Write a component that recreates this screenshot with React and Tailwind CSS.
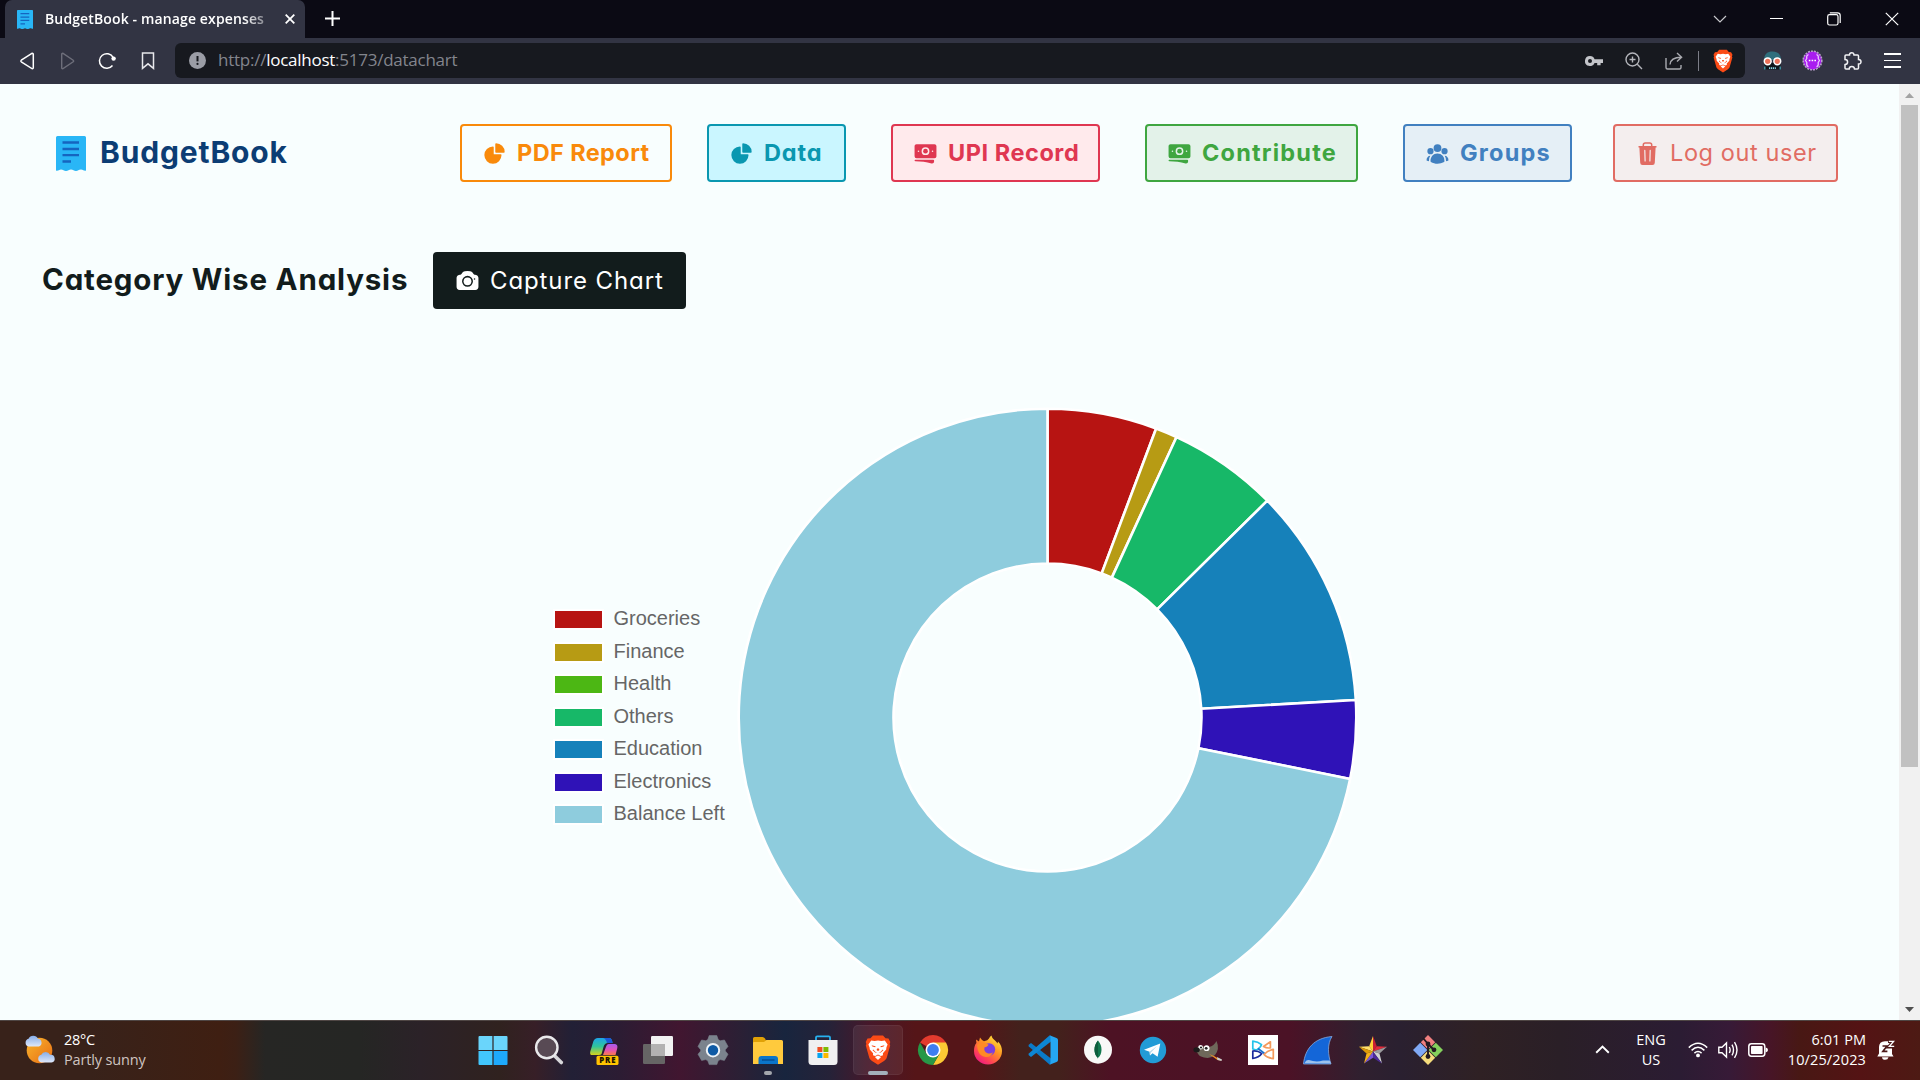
import React from "react";
import {
  HiChartPie,
  HiBanknotes,
  HiUserGroup,
  HiCamera,
} from "react-icons/hi2";

const UI = "font-['Open_Sans','Noto_Sans',sans-serif]";

/* ---------- shared drawings ---------- */

function Receipt({ className }) {
  return (
    <svg className={className} viewBox="0 0 30 35" preserveAspectRatio="none">
      <path
        d="M0 1.5Q0 0 1.5 0H28.5Q30 0 30 1.5V34.5C28 35.4 27.5 33.4 25 33.4S22 35 20 35S17 33.4 15 33.4S12 35 10 35S7 33.4 5 33.4S2 35.4 0 34.5Z"
        fill="#29b6f6"
      />
      <path d="M6.5 6.5H23M6.5 13H23M6.5 19.2H23M6.5 25.5H15" stroke="#1565c0" strokeWidth="2.3" />
    </svg>
  );
}

function Trash({ className }) {
  return (
    <svg className={className} viewBox="0 0 25 25">
      <path d="M8.3 5V4Q8.3 2 10.3 2H14.7Q16.7 2 16.7 4V5" fill="none" stroke="currentColor" strokeWidth="1.5" />
      <path d="M3.5 5H21.5V6.6H20.6L19.8 21.8Q19.7 24 17.5 24H7.5Q5.3 24 5.2 21.8L4.4 6.6H3.5Z" fill="currentColor" />
      <path d="M9.8 9.4L10.1 20M15.2 9.4L14.9 20" stroke="#f4eeee" strokeWidth="1.2" strokeLinecap="round" />
    </svg>
  );
}

function BraveLogo({ className }) {
  return (
    <svg className={className} viewBox="0 0 26 30">
      <path
        d="M8 0.5H18L20.5 3.2L23.5 3.5L25.3 7L24.6 9L25.2 10.5L21.8 22.5C21.2 24.2 20.2 25.2 19 26L13 29.8L7 26C5.8 25.2 4.8 24.2 4.2 22.5L0.8 10.5L1.4 9L0.7 7L2.5 3.5L5.5 3.2Z"
        fill="#fb4b16"
      />
      <path
        d="M6.2 5.6L9.6 6.1L13 5.5L16.4 6.1L19.8 5.6L22.6 9.6L21.4 12.4L21.2 14.6L17.9 18.2L18 20.2L15.8 20.9L13 19.4L10.2 20.9L8 20.2L8.1 18.2L4.8 14.6L4.6 12.4L3.4 9.6Z"
        fill="#fff"
      />
      <path d="M9.9 21.9L13 20.4L16.1 21.9L13 24.9Z" fill="#fff" />
      <path
        d="M6.5 10.2L10.6 11.2L10.2 12.2L7.4 11.5ZM19.5 10.2L15.4 11.2L15.8 12.2L18.6 11.5ZM11.6 15L13 15.9L14.4 15L13.9 13.6H12.1ZM8.2 14.4L10.3 16.8L12.2 17.8L10.2 17.6L7.6 15.2ZM17.8 14.4L15.7 16.8L13.8 17.8L15.8 17.6L18.4 15.2Z"
        fill="#fb4b16"
      />
    </svg>
  );
}

/* ---------- browser chrome ---------- */

function TabStrip() {
  return (
    <div className="flex h-[38px] items-stretch bg-[#0b0a14] text-white">
      <div className="ml-[5px] flex w-[300px] items-center rounded-t-[7px] bg-[#323443] pl-3">
        <Receipt className="h-[19px] w-4" />
        <div
          className={`ml-3 w-[223px] whitespace-nowrap pb-px text-[14px] font-semibold tracking-[0.13px] ${UI} [mask-image:linear-gradient(to_right,black_89%,rgba(0,0,0,0.45)_98%)]`}
        >
          BudgetBook - manage expenses
        </div>
        <svg className="ml-[17px] h-[10px] w-[10px]" viewBox="0 0 10 10">
          <path d="M0.7 0.7L9.3 9.3M9.3 0.7L0.7 9.3" stroke="#fff" strokeWidth="1.8" />
        </svg>
      </div>
      <svg className="ml-5 mt-[11px] h-[15px] w-[15px]" viewBox="0 0 15 15">
        <path d="M7.5 0V15M0 7.5H15" stroke="#fff" strokeWidth="2" />
      </svg>
      <div className="ml-auto mr-[21px] flex items-center pb-px">
        <svg className="h-[8px] w-[14px]" viewBox="0 0 14 8">
          <path d="M1 1L7 7L13 1" fill="none" stroke="#c8c8cc" strokeWidth="1.2" />
        </svg>
        <div className="ml-[43px] h-px w-[13px] bg-white" />
        <svg className="ml-[44px] h-[14px] w-[14px]" viewBox="0 0 14 14" fill="none" stroke="#fff" strokeWidth="1.2">
          <rect x="0.7" y="2.7" width="10.3" height="10.3" rx="1.8" />
          <path d="M2.8 0.9H10.5Q13.2 0.9 13.2 3.6V11" />
        </svg>
        <svg className="ml-[44px] h-[14px] w-[14px]" viewBox="0 0 14 14">
          <path d="M0.8 0.8L13.2 13.2M13.2 0.8L0.8 13.2" stroke="#fff" strokeWidth="1.2" />
        </svg>
      </div>
    </div>
  );
}

function AddressBar() {
  return (
    <div className="flex h-[46px] items-center bg-[#323443] pb-px">
      <svg className="ml-5 h-[18px] w-[15px]" viewBox="0 0 15 18" fill="none" stroke="#fff" strokeWidth="1.5">
        <path d="M12.3 1.2L1.3 8.2Q0.4 9 1.3 9.8L12.3 16.8Q13.3 16.8 13.3 15.8V2.2Q13.3 1.2 12.3 1.2Z" />
      </svg>
      <svg className="ml-[25px] h-[18px] w-[15px]" viewBox="0 0 15 18" fill="none" stroke="#6d6e7a" strokeWidth="1.4">
        <path d="M2.7 1.2L13.2 8.2Q14.1 9 13.2 9.8L2.7 16.8Q1.7 16.8 1.7 15.8V2.2Q1.7 1.2 2.7 1.2Z" />
      </svg>
      <svg className="ml-[23px] h-[18px] w-[19px]" viewBox="0 0 19 18" fill="none" stroke="#fff" strokeWidth="1.5">
        <path d="M14.5 13.5A7.3 7.3 0 1 1 15 5.2" />
        <circle cx="15.6" cy="6.6" r="2.2" fill="#fff" stroke="none" />
      </svg>
      <svg className="ml-[24px] h-[18px] w-[14px]" viewBox="0 0 14 18" fill="none" stroke="#e8e8ec" strokeWidth="1.5">
        <path d="M1.5 1H12.5V16.3L7 11.8L1.5 16.3Z" />
      </svg>
      <div className="ml-[20px] flex h-[35px] w-[1570px] items-center rounded-[6px] bg-[#17191f]">
        <svg className="ml-[14px] h-[17px] w-[17px]" viewBox="0 0 17 17">
          <circle cx="8.5" cy="8.5" r="8.5" fill="#9b9da6" />
          <path d="M8.5 4V9.4" stroke="#17191f" strokeWidth="2" />
          <circle cx="8.5" cy="11.9" r="1.1" fill="#17191f" />
        </svg>
        <div className={`ml-3 whitespace-nowrap pb-px text-[17px] font-normal tracking-[-0.25px] text-[#83858d] ${UI}`}>
          http://<span className="text-white">localhost</span>:5173/datachart
        </div>
        <div className="ml-auto mr-3 flex items-center">
          <svg className="h-[10px] w-[18px]" viewBox="0 0 18 10">
            <path
              fillRule="evenodd"
              d="M5 0A5 5 0 1 0 9.6 6.9H12.2V9.2H15.6V6.9H18V3.2H9.6A5 5 0 0 0 5 0ZM5 3A2 2 0 1 1 5 7A2 2 0 1 1 5 3Z"
              fill="#c4c5ca"
            />
          </svg>
          <svg className="ml-[22px] h-[18px] w-[18px]" viewBox="0 0 18 18" fill="none" stroke="#b4b5bb" strokeWidth="1.4">
            <circle cx="7.5" cy="7.5" r="6.5" />
            <path d="M12.3 12.3L17 17M4.5 7.5H10.5M7.5 4.5V10.5" />
          </svg>
          <svg className="ml-[22px] h-[18px] w-[18px]" viewBox="0 0 18 18" fill="none" stroke="#a9aab0" strokeWidth="1.4">
            <path d="M1 6V15.5Q1 17 2.5 17H14.5Q16 17 16 15.5V13M5 12.5Q5.5 5.5 16.3 5.3M12 1L16.6 5.3L12 9.6" />
          </svg>
          <div className="ml-[15px] h-[20px] w-px bg-[#7c7e88]" />
          <BraveLogo className="ml-[14px] h-[24px] w-[20px]" />
        </div>
      </div>
      <svg className="ml-[18px] h-[19px] w-[19px]" viewBox="0 0 19 19">
        <path d="M1 9C1 3 4.5 0.5 9.5 0.5S18 3 18 9Z" fill="#2f6f7d" />
        <path d="M1.5 12H17.5V18.5H1.5Z" fill="#10151b" />
        <path d="M1 15.5H2.5V18.5H1ZM16.5 15.5H18V18.5H16.5Z" fill="#3d91a0" />
        <circle cx="4.7" cy="10.3" r="3.4" fill="#ec7159" stroke="#fff" strokeWidth="1.5" />
        <circle cx="14.3" cy="10.3" r="3.4" fill="#ec7159" stroke="#fff" strokeWidth="1.5" />
        <path d="M6 17.2H13" stroke="#8cd5e3" strokeWidth="1.8" strokeDasharray="1.2 0.7" />
      </svg>
      <svg className="ml-[20px] h-[21px] w-[21px]" viewBox="0 0 21 21" fill="none">
        <circle cx="10.5" cy="10.5" r="9.3" fill="#a91cf0" stroke="#b9a0cc" strokeWidth="1.6" strokeDasharray="2 1" />
        <path
          d="M6.5 4.5Q4 5.5 4.8 8.5L3.5 10.5L4.8 12.5Q4.2 16 6.5 16.8M14.5 4.5Q17 5.5 16.2 8.5L17.5 10.5L16.2 12.5Q16.8 16 14.5 16.8"
          stroke="#ecc8ff"
          strokeWidth="1.2"
        />
        <path d="M6.8 10.5H14.5" stroke="#fff" strokeWidth="1.6" strokeDasharray="1.6 1.2" />
      </svg>
      <svg className="ml-[21px] h-[18px] w-[18px]" viewBox="0 0 18 18" fill="none" stroke="#f1f1f4" strokeWidth="1.5">
        <path d="M1 4Q1 3 2 3H5.5Q5.5 0.8 7.7 0.8T10 3H13.5Q14.5 3 14.5 4V7.5Q17 7.5 17 9.8T14.5 12V16Q14.5 17 13.5 17H10.5Q10.3 14.6 7.8 14.6T5.2 17H2Q1 17 1 16V12.6Q3.6 12.4 3.6 10T1 7.6Z" />
      </svg>
      <div className="ml-[22px] flex w-[17px] flex-col gap-[5px]">
        <div className="h-[1.5px] bg-white" />
        <div className="h-[1.5px] bg-white" />
        <div className="h-[1.5px] bg-white" />
      </div>
    </div>
  );
}

/* ---------- application page ---------- */

const navItems = [
  { label: "PDF Report", Icon: HiChartPie, cls: "w-[212px] border-[#f98a0b] text-[#f98a0b]", text: "font-bold tracking-[0.4px]" },
  { label: "Data", Icon: HiChartPie, cls: "ml-[35px] w-[139px] border-[#0a97b0] bg-[#caf6ff] text-[#0a97b0]", text: "font-bold tracking-[0.9px]" },
  { label: "UPI Record", Icon: HiBanknotes, cls: "ml-[45px] w-[209px] border-[#df3751] bg-[#ffeaec] text-[#df3751]", text: "font-bold tracking-[0.55px]" },
  { label: "Contribute", Icon: HiBanknotes, cls: "ml-[45px] w-[213px] border-[#3fa640] bg-[#e3f2e9] text-[#3fa640]", text: "font-bold tracking-[1.2px]" },
  { label: "Groups", Icon: HiUserGroup, cls: "ml-[45px] w-[169px] border-[#4180c0] bg-[#e5eff6] text-[#4180c0]", text: "font-bold tracking-[1.2px]" },
  { label: "Log out user", Icon: Trash, cls: "ml-[41px] w-[225px] border-[#e16c63] bg-[#f4eeee] text-[#e16c63]", text: "font-normal tracking-[0.6px]" },
];

function Navbar() {
  return (
    <header className="flex h-[138px] items-center">
      <Receipt className="ml-[56px] h-[35px] w-[30px]" />
      <div className="ml-[14px] w-[360px] whitespace-nowrap pb-[2px] text-[30px] font-bold tracking-[0.85px] text-[#0c3d74]">
        BudgetBook
      </div>
      {navItems.map(({ label, Icon, cls, text }) => (
        <button
          key={label}
          className={`flex h-[58px] shrink-0 items-center whitespace-nowrap rounded-[4px] border-2 pl-[20px] text-[23.5px] ${cls}`}
        >
          <Icon className="h-[25px] w-[25px] shrink-0" />
          <span className={`ml-[10px] ${text}`}>{label}</span>
        </button>
      ))}
    </header>
  );
}

const slices = [
  { label: "Groceries", color: "#b71412", from: 0, to: 20.6, swatch: "bg-[#b71412]" },
  { label: "Finance", color: "#b79b14", from: 20.6, to: 24.7, swatch: "bg-[#b79b14]" },
  { label: "Health", color: "#4cb714", from: 24.7, to: 24.7, swatch: "bg-[#4cb714]" },
  { label: "Others", color: "#17b868", from: 24.7, to: 45.4, swatch: "bg-[#17b868]" },
  { label: "Education", color: "#1681ba", from: 45.4, to: 86.75, swatch: "bg-[#1681ba]" },
  { label: "Electronics", color: "#2f12b7", from: 86.75, to: 101.5, swatch: "bg-[#2f12b7]" },
  { label: "Balance Left", color: "#8eccdd", from: 101.5, to: 360, swatch: "bg-[#8eccdd]" },
];

const CX = 310.5;
const CY = 310.5;
const R_OUT = 308.8;
const R_IN = 154;

function point(r, deg) {
  const a = (deg * Math.PI) / 180;
  return `${CX + r * Math.sin(a)} ${CY - r * Math.cos(a)}`;
}

function ring(from, to) {
  const large = to - from > 180 ? 1 : 0;
  return `M${point(R_OUT, from)}A${R_OUT} ${R_OUT} 0 ${large} 1 ${point(R_OUT, to)}L${point(R_IN, to)}A${R_IN} ${R_IN} 0 ${large} 0 ${point(R_IN, from)}Z`;
}

function DoughnutChart() {
  return (
    <div className="mt-[98px] flex items-center pl-[553px]">
      <ul className="w-[184px] pb-[2px] font-['Liberation_Sans',Arial,sans-serif] text-[20px] text-[#666]">
        {slices.map((s) => (
          <li key={s.label} className="flex h-[32.5px] items-center whitespace-nowrap leading-none">
            <span className={`mt-[2px] h-[21px] w-[51px] border-2 border-white ${s.swatch}`} />
            <span className="mb-px ml-[9.5px]">{s.label}</span>
          </li>
        ))}
      </ul>
      <svg className="h-[620px] w-[620px] shrink-0" viewBox="0 0 620 620">
        {slices
          .filter((s) => s.to > s.from)
          .map((s) => (
            <path key={s.label} d={ring(s.from, s.to)} fill={s.color} stroke="#fff" strokeWidth="2.6" strokeLinejoin="bevel" />
          ))}
      </svg>
    </div>
  );
}

function Page() {
  return (
    <div className="h-[936px] min-w-0 flex-1 overflow-hidden bg-[#f8fefe] font-['Inter',sans-serif] [font-feature-settings:'cv11']">
      <Navbar />
      <div className="mt-[30px] flex h-[57px] items-center">
        <h1 className="ml-[42px] w-[391px] whitespace-nowrap pb-[2px] text-[29.5px] font-bold tracking-[0.82px] text-[#121c1c]">
          Category Wise Analysis
        </h1>
        <button className="flex h-[57px] w-[253px] items-center whitespace-nowrap rounded-[4px] bg-[#121c1c] pl-[22px] text-[24px] tracking-[0.9px] text-white">
          <HiCamera className="h-[25px] w-[25px]" />
          <span className="ml-[10px]">Capture Chart</span>
        </button>
      </div>
      <DoughnutChart />
    </div>
  );
}

function Scrollbar() {
  return (
    <div className="flex h-[936px] w-[21px] flex-col items-center bg-[#f1f1f1]">
      <svg className="mt-[9px] h-[5px] w-[9px]" viewBox="0 0 9 5">
        <path d="M0 5L4.5 0L9 5Z" fill="#a3a3a3" />
      </svg>
      <div className="mt-[7px] h-[662px] w-[17px] bg-[#c1c1c1]" />
      <svg className="mb-[8px] mt-auto h-[5px] w-[9px]" viewBox="0 0 9 5">
        <path d="M0 0L4.5 5L9 0Z" fill="#505050" />
      </svg>
    </div>
  );
}

/* ---------- taskbar icons, each on a 30 x 30 grid ---------- */

const G = ({ children }) => (
  <svg className="h-[30px] w-[30px] overflow-visible" viewBox="0 0 30 30">
    {children}
  </svg>
);

const WindowsIcon = () => (
  <G>
    <path d="M0.5 2Q0.5 1 1.5 1H14.4V14.9H0.5ZM15.6 1H28.5Q29.5 1 29.5 2V14.9H15.6Z" fill="#6ad5fb" />
    <path d="M0.5 16.1H14.4V30H1.5Q0.5 30 0.5 29Z" fill="#42c6fc" />
    <path d="M15.6 16.1H29.5V29Q29.5 30 28.5 30H15.6Z" fill="#1ea9fb" />
  </G>
);

const SearchIcon = () => (
  <G>
    <path d="M21.3 20.5L28.3 27.5" stroke="#d7d7da" strokeWidth="3.6" strokeLinecap="round" />
    <circle cx="13.8" cy="12.5" r="10.7" fill="#584a54" stroke="#e9e9eb" strokeWidth="2.4" />
  </G>
);

const CopilotIcon = () => (
  <G>
    <defs>
      <linearGradient id="cpA" x1="0" y1="0" x2="0" y2="1">
        <stop offset="0" stopColor="#1da4e8" />
        <stop offset="0.5" stopColor="#31c59a" />
        <stop offset="1" stopColor="#d6d31c" />
      </linearGradient>
      <linearGradient id="cpB" x1="0" y1="0" x2="0" y2="1">
        <stop offset="0" stopColor="#a45bef" />
        <stop offset="0.55" stopColor="#e452b4" />
        <stop offset="1" stopColor="#fb7a4b" />
      </linearGradient>
    </defs>
    <g transform="translate(2 0)">
      <path d="M8 3H19Q22 3 22.5 8H18Q14.5 8 13.5 12L11.5 19Q11 20 8.5 20H2Q-0.5 20 0.3 16.4L3.3 6.5Q4.5 3 8 3Z" fill="url(#cpA)" />
      <path d="M13 3H19Q22 3 22.5 8H17Q16 3.8 13 3Z" fill="#1a59d8" />
      <path d="M18.5 9H25Q28 9.5 27.3 13L25.5 20H13L16 11.8Q16.8 9.2 18.5 9Z" fill="url(#cpB)" />
      <rect x="6.5" y="20.8" width="22" height="9.2" rx="1.6" fill="#ffc400" />
      <text x="17.8" y="28.3" textAnchor="middle" fontSize="7.8" fontWeight="800" letterSpacing="0.9" fontFamily="Open Sans, sans-serif" fill="#1c1400">
        PRE
      </text>
    </g>
  </G>
);

const TaskViewIcon = () => (
  <G>
    <rect x="0" y="9" width="22" height="20" rx="1.2" fill="#666565" />
    <rect x="8" y="1" width="22" height="20" rx="1.2" fill="#f2f2f2" />
    <path d="M8 9H22V21H9Q8 21 8 20Z" fill="#b3b2b2" />
  </G>
);

const SettingsIcon = () => (
  <G>
    <path
      d="M11.2 0.6H18.8L20.2 4.6L22.2 5.8L26.4 5L30 11.4L27.3 14.8V16L30 19.2L26.4 25.4L22.2 24.6L20.2 25.8L18.8 29.6H11.2L9.8 25.8L7.8 24.6L3.6 25.4L0 19.2L2.7 16V14.8L0 11.4L3.6 5L7.8 5.8L9.8 4.6Z"
      fill="#7b838d"
      stroke="#7b838d"
      strokeLinejoin="round"
      strokeWidth="0.6"
    />
    <circle cx="15" cy="15.2" r="6.2" fill="#0e5aa5" stroke="#eef3f8" strokeWidth="2" />
  </G>
);

const FolderIcon = () => (
  <G>
    <path d="M0 3.5Q0 2 1.5 2H9.5Q11 2 12 3.5L13 5.5H28V12H0Z" fill="#e0a106" />
    <path d="M0 8Q0 7 1 7H11L13.5 5H28.5Q30 5 30 6.5V29H0Z" fill="#ffca3d" />
    <path d="M5.5 29V24Q5.5 21 8.5 21H22Q25 21 25 24V29Z" fill="#0b75c9" />
    <path d="M9 25H21.5" stroke="#064a8c" strokeWidth="1.3" />
  </G>
);

const StoreIcon = () => (
  <G>
    <path d="M8 7V2.6Q8 1.4 9.2 1.4H20.8Q22 1.4 22 2.6V7" fill="none" stroke="#27b1ef" strokeWidth="1.8" />
    <path d="M0.5 5H29.5V26.5Q29.5 30 26 30H4Q0.5 30 0.5 26.5Z" fill="#f0f0f1" />
    <path d="M9.4 12H14.4V17H9.4Z" fill="#ef4f24" />
    <path d="M15.4 12H20.4V17H15.4Z" fill="#7fba00" />
    <path d="M9.4 18H14.4V23H9.4Z" fill="#06a4ef" />
    <path d="M15.4 18H20.4V23H15.4Z" fill="#fcb900" />
  </G>
);

const BraveIcon = () => <BraveLogo className="h-[30px] w-[26px]" />;

const ChromeIcon = () => (
  <G>
    <path d="M15 15L2.01 7.5A15 15 0 0 1 27.99 7.5Z" fill="#e33b2e" />
    <path d="M15 7.5H28A15 15 0 0 1 15 30L21.5 18.75Z" fill="#fcc934" />
    <path d="M8.5 18.75L2 7.5A15 15 0 0 0 15 30L21.5 18.75L15 22Z" fill="#279847" />
    <circle cx="15" cy="15" r="7.5" fill="#fff" />
    <circle cx="15" cy="15" r="5.9" fill="#3f7ef0" />
  </G>
);

const FirefoxIcon = () => (
  <G>
    <defs>
      <linearGradient id="fox" x1="0.85" y1="0.05" x2="0.2" y2="0.95">
        <stop offset="0" stopColor="#ffe63f" />
        <stop offset="0.4" stopColor="#ff9522" />
        <stop offset="0.75" stopColor="#ff4455" />
        <stop offset="1" stopColor="#ee1a83" />
      </linearGradient>
    </defs>
    <path
      d="M18.5 0.5C19 3 20.5 4 22 5.5C23 6.5 24 7.5 24.5 8.5L25 6.5C28 9.5 29 13 29 16A14 13.6 0 0 1 1 16C1 12.5 1.8 10 3.4 8L3 4.5L6 6.5L7 2.5Q8.5 5 11 6.3Q15 5.5 16 3.6Q16.8 1.5 18.5 0.5Z"
      fill="url(#fox)"
    />
    <circle cx="16" cy="14.5" r="6.2" fill="#7a3fe0" />
    <path d="M4 10Q8 6 12.5 8.5L15.5 9.5Q15 11.8 11.6 12.3Q10.3 16.5 14.5 18.3Q18 19 20 17.3Q18 22.5 12.5 22Q6.5 21 4.8 15Z" fill="#ff8a26" />
  </G>
);

const VsCodeIcon = () => (
  <G>
    <path d="M0.5 10L3 8L23 23.5V29L21.5 29.5L0.8 11.4Z" fill="#0a7ac8" />
    <path d="M0.5 20L3 22L23 6.5V1L21.5 0.5L0.8 18.6Z" fill="#0d86d4" />
    <path d="M21.5 0.2L28.5 3Q30 3.7 30 5V25Q30 26.3 28.5 27L21.5 29.8Q22.5 29 22.5 27V3Q22.5 1 21.5 0.2Z" fill="#25a7f2" />
  </G>
);

const MongoIcon = () => (
  <G>
    <circle cx="15" cy="14.7" r="14" fill="#f8f8f7" />
    <path d="M15 5.5C20 11 19.2 19 15.5 22.5H14.5C10.8 19 10 11 15 5.5Z" fill="#12794f" />
    <path d="M15 5.5C10 11 10.8 19 14.5 22.5L15 24Z" fill="#0d5d3d" />
  </G>
);

const TelegramIcon = () => (
  <G>
    <circle cx="15" cy="15" r="13.2" fill="#229bd6" />
    <path d="M6 14.8L22.3 8.4L19.6 21.8L14.6 18.2L12 20.6L11.6 16.7Z" fill="#fff" />
    <path d="M11.6 16.7L19 10.9L13 17.6L12 20.6Z" fill="#b9d9ea" />
  </G>
);

const GimpIcon = () => (
  <G>
    <path d="M1 15L6 11L16 12Q21 11 23.5 6Q27 14 22 20Q18 24 11 22.5Q6 21.5 4.5 18Z" fill="#6e685a" />
    <path d="M16 19L21 21L28.5 25.5L24.5 25Z" fill="#ef9227" />
    <path d="M24 22L29 24.5L28.5 26L24.5 25Z" fill="#cfcfcf" />
    <circle cx="7.6" cy="12.3" r="2.3" fill="#fff" />
    <circle cx="13.6" cy="13.2" r="2.9" fill="#fff" />
    <circle cx="8" cy="12.5" r="1.1" fill="#222" />
    <circle cx="13.2" cy="13.3" r="1.4" fill="#222" />
    <ellipse cx="3.6" cy="14.8" rx="3.2" ry="2.6" fill="#1c1b1b" />
  </G>
);

const BowIcon = () => (
  <G>
    <path d="M0 0H30V30H0Z" fill="#fff" />
    <g fill="none" strokeWidth="1.7" strokeLinejoin="round">
      <path d="M8.5 15L4.8 14V6.2Q10 6.8 13.6 9.6Q12.5 13 8.5 15" stroke="#25c3ea" />
      <path d="M15.5 11.5L22.4 6.8V12.8Q19 13.5 15.5 11.5Z" stroke="#f49a5d" />
      <path d="M4.8 16V23.5Q11 22.5 13.8 18.6Q10 15.5 4.8 16Z" stroke="#1b2a9d" />
      <path d="M10 13.5L16.5 18.5" stroke="#1d6fcd" />
      <path d="M25.3 14.4V23.6Q19 23 16 19.5Q19.5 15.5 25.3 14.4Z" stroke="#f49a5d" />
    </g>
  </G>
);

const SharkFinIcon = () => (
  <G>
    <path d="M0.5 29C2 14 11 3 29 1.5C24 9 25 20 28 29Z" fill="#1466d8" stroke="#86a9dd" strokeWidth="0.8" />
    <path d="M1.5 28.3Q3 24.5 6 25Q13 27.5 20 25.5L26.6 25.5L28 28.5Z" fill="#9cc2ee" />
  </G>
);

const StarIcon = () => (
  <G>
    <path d="M15 1L11.2 11.3L15 16.5Z" fill="#ffd23a" />
    <path d="M15 1L18.8 11.3L15 16.5Z" fill="#c81e33" />
    <path d="M11.2 11.3L1 11.8L15 16.5Z" fill="#ffe06b" />
    <path d="M1 11.8L8.5 18.5L15 16.5Z" fill="#dd9a08" />
    <path d="M18.8 11.3L29 11.8L15 16.5Z" fill="#e02b3a" />
    <path d="M29 11.8L21.5 18.5L15 16.5Z" fill="#9a9a9d" />
    <path d="M21.5 18.5L24 28.5L15 16.5Z" fill="#d0d0d2" />
    <path d="M15 16.5L24 28.5L15 22.8Z" fill="#4b2a99" />
    <path d="M15 16.5L6 28.5L15 22.8Z" fill="#7a56d6" />
    <path d="M8.5 18.5L6 28.5L15 16.5Z" fill="#f5b21a" />
  </G>
);

const GitIcon = () => (
  <G>
    <path d="M15 0L22.2 7.2L15 14.4L7.8 7.2Z" fill="#f08080" />
    <path d="M22.8 7.8L30 15L22.8 22.2L15.6 15Z" fill="#84d15c" />
    <path d="M7.2 7.8L14.4 15L7.2 22.2L0 15Z" fill="#80a9f5" />
    <path d="M15 15.6L22.2 22.8L15 30L7.8 22.8Z" fill="#f5dc7c" />
    <path d="M10 3L15 9V22M15 9L20.5 14.5" stroke="#231a20" strokeWidth="1.9" fill="none" />
    <circle cx="15" cy="9" r="2.4" fill="#231a20" />
    <circle cx="15" cy="21.5" r="2.4" fill="#231a20" />
    <circle cx="21" cy="14.8" r="2.4" fill="#231a20" />
  </G>
);

const apps = [
  { id: "start", Icon: WindowsIcon },
  { id: "search", Icon: SearchIcon },
  { id: "copilot", Icon: CopilotIcon },
  { id: "tasks", Icon: TaskViewIcon },
  { id: "settings", Icon: SettingsIcon },
  { id: "files", Icon: FolderIcon, mark: "w-[8px] bg-[#a3a7ad]" },
  { id: "store", Icon: StoreIcon },
  { id: "brave", Icon: BraveIcon, active: true, mark: "w-[20px] bg-[#a3afbb]" },
  { id: "chrome", Icon: ChromeIcon },
  { id: "firefox", Icon: FirefoxIcon },
  { id: "vscode", Icon: VsCodeIcon },
  { id: "mongo", Icon: MongoIcon },
  { id: "telegram", Icon: TelegramIcon },
  { id: "gimp", Icon: GimpIcon },
  { id: "bow", Icon: BowIcon },
  { id: "fin", Icon: SharkFinIcon },
  { id: "star", Icon: StarIcon },
  { id: "git", Icon: GitIcon },
];

function Weather() {
  return (
    <div className="flex w-[465px] items-center">
      <svg className="ml-[24px] h-[32px] w-[32px]" viewBox="0 0 32 32">
        <defs>
          <linearGradient id="sun" x1="0" y1="0" x2="1" y2="1">
            <stop offset="0" stopColor="#f8b52c" />
            <stop offset="1" stopColor="#e86d15" />
          </linearGradient>
          <linearGradient id="cloud" x1="0" y1="0" x2="0" y2="1">
            <stop offset="0" stopColor="#87aeea" />
            <stop offset="1" stopColor="#dfe8fa" />
          </linearGradient>
        </defs>
        <circle cx="15.5" cy="16.5" r="12.8" fill="url(#sun)" />
        <path d="M4.5 12.5A4 4 0 0 1 4.5 4.8A5.2 5.2 0 0 1 14 4.8A4 4 0 0 1 15 12.5Z" fill="url(#cloud)" />
        <path d="M17 28.5A4 4 0 0 1 17.3 20.8A4.8 4.8 0 0 1 26 20.8A3.9 3.9 0 0 1 27.5 28.5Z" fill="url(#cloud)" />
      </svg>
      <div className="ml-[8px] text-[14.5px] leading-[20px] tracking-[-0.15px]">
        <div className="tracking-[-0.3px]">28°C</div>
        <div className="text-[#cfc5c1]">Partly sunny</div>
      </div>
    </div>
  );
}

function Tray() {
  return (
    <div className="ml-auto flex items-center">
      <svg className="h-[9px] w-[15px]" viewBox="0 0 15 9">
        <path d="M1.2 7.8L7.5 1.6L13.8 7.8" fill="none" stroke="#fff" strokeWidth="1.9" />
      </svg>
      <div className="ml-[18px] w-[46px] text-center text-[14.5px] leading-[20px]">
        <div>ENG</div>
        <div>US</div>
      </div>
      <svg className="ml-[14px] h-[16px] w-[20px]" viewBox="0 0 20 16" fill="none" stroke="#fff" strokeWidth="1.5">
        <path d="M0.8 5.6Q10 -3.2 19.2 5.6M3.6 8.4Q10 2.2 16.4 8.4M6.4 11.1Q10 7.8 13.6 11.1" />
        <circle cx="10" cy="13.4" r="1.9" fill="#fff" stroke="none" />
      </svg>
      <svg className="ml-[10px] h-[18px] w-[20px]" viewBox="0 0 20 18" fill="none" stroke="#fff" strokeWidth="1.4">
        <path d="M0.8 6.3H4L8.5 2V16L4 11.7H0.8Z" />
        <path d="M11.3 6Q13 9 11.3 12M14 3.6Q17 9 14 14.4M16.5 1.2Q21.5 9 16.5 16.8" />
      </svg>
      <svg className="ml-[10px] h-[14px] w-[20px]" viewBox="0 0 20 14">
        <rect x="0.8" y="0.8" width="16" height="12.4" rx="2.6" fill="none" stroke="#fff" strokeWidth="1.5" />
        <rect x="3" y="3" width="11.6" height="8" rx="0.8" fill="#fff" />
        <path d="M17.6 4.6Q20 5 20 7T17.6 9.4Z" fill="#fff" />
      </svg>
      <div className="ml-[16px] w-[82px] whitespace-nowrap text-right text-[14.5px] leading-[20px]">
        <div className="tracking-[0.05px]">6:01 PM</div>
        <div className="tracking-[0.13px]">10/25/2023</div>
      </div>
      <svg className="ml-[11px] mr-[25px] h-[20px] w-[18px]" viewBox="0 0 18 20">
        <path d="M2 7Q2 1.5 8 1.2H15V14L16.5 16.6H0.3L2 13.5Z" fill="#fff" />
        <path d="M5 17.2H11.5Q11 19.8 8.2 19.8T5 17.2Z" fill="#fff" />
        <path d="M5.5 6H10L5.8 11.4H10.4" fill="none" stroke="#4b1818" strokeWidth="1.6" />
        <path d="M11 1.2H16.2L12 6.8H17.4" fill="none" stroke="#4b1818" strokeWidth="3.4" />
        <path d="M11.8 1.4H16.6L12.4 6.4H17.2" fill="none" stroke="#fff" strokeWidth="1.4" />
      </svg>
    </div>
  );
}

function Taskbar() {
  return (
    <div
      className={`flex h-[60px] items-stretch border-t border-[#4f4644] pb-[2px] text-white ${UI} bg-[linear-gradient(to_right,#38221a_0px,#38221a_90px,#3f1f12_220px,#3c2015_236px,#262624_265px,#252624_360px,#2b2228_420px,#30221f_500px,#371f27_535px,#222036_572px,#2c1c33_620px,#411630_680px,#2a2035_742px,#18253e_785px,#262238_830px,#47182a_870px,#551518_915px,#551518_975px,#43211c_1020px,#43211c_1060px,#4d1224_1110px,#4b1226_1290px,#30202f_1360px,#2a2030_1400px,#2f2124_1480px,#2a1f27_1560px,#2b1c33_1680px,#371a37_1730px,#471527_1770px,#481814_1800px,#541314_1860px,#4d1a14_1920px)]`}
    >
      <Weather />
      <div className="flex">
        {apps.map(({ id, Icon, active, mark }) => (
          <div key={id} className="flex w-[55.03px] items-center justify-center">
            <div
              className={`relative flex h-[50px] w-[50px] items-center justify-center rounded-[5px] border ${
                active ? "border-white/5 bg-white/[0.07]" : "border-transparent"
              }`}
            >
              <Icon />
              {mark && <span className={`absolute -bottom-px h-[4px] rounded-full ${mark}`} />}
            </div>
          </div>
        ))}
      </div>
      <Tray />
    </div>
  );
}

export default function App() {
  return (
    <div className="flex h-[1080px] w-[1920px] flex-col overflow-hidden">
      <TabStrip />
      <AddressBar />
      <div className="flex h-[936px]">
        <Page />
        <Scrollbar />
      </div>
      <Taskbar />
    </div>
  );
}
